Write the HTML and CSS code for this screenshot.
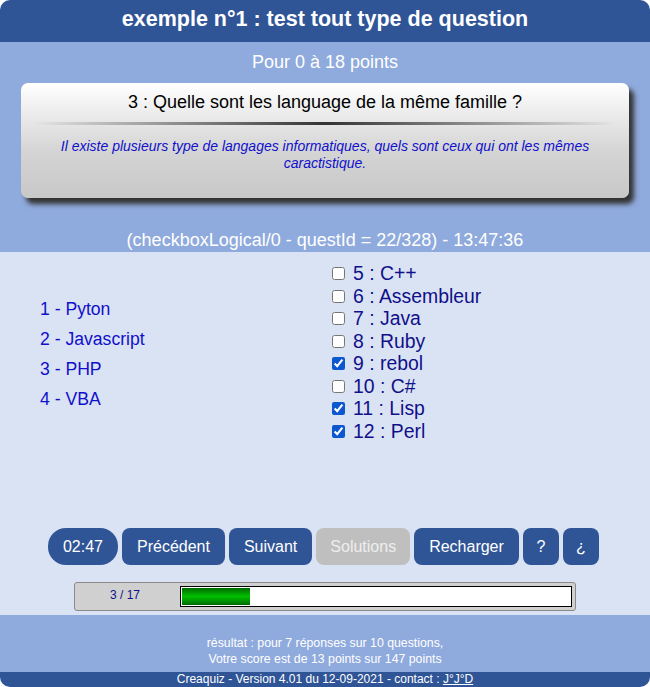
FILE: index.html
```html
<!DOCTYPE html>
<html lang="fr">
<head>
<meta charset="utf-8">
<title>Creaquiz</title>
<link rel="stylesheet" href="styles.css">
</head>
<body>
<div class="quiz">
  <div class="header">exemple n°1 : test tout type de question</div>
  <div class="band">
    <div class="points">Pour 0 à 18 points</div>
    <div class="card">
      <div class="card-title">3 : Quelle sont les language de la même famille ?</div>
      <div class="sep"></div>
      <div class="card-desc">Il existe plusieurs type de langages informatiques, quels sont ceux qui ont les mêmes caractistique.</div>
    </div>
    <div class="info">(checkboxLogical/0 - questId = 22/328) - 13:47:36</div>
  </div>
  <div class="main">
    <div class="answers">
      <div class="left">
        <div class="item">1 - Pyton</div>
        <div class="item">2 - Javascript</div>
        <div class="item">3 - PHP</div>
        <div class="item">4 - VBA</div>
      </div>
      <div class="right">
        <label class="opt"><input type="checkbox"> 5 : C++</label>
        <label class="opt"><input type="checkbox"> 6 : Assembleur</label>
        <label class="opt"><input type="checkbox"> 7 : Java</label>
        <label class="opt"><input type="checkbox"> 8 : Ruby</label>
        <label class="opt"><input type="checkbox" checked> 9 : rebol</label>
        <label class="opt"><input type="checkbox"> 10 : C#</label>
        <label class="opt"><input type="checkbox" checked> 11 : Lisp</label>
        <label class="opt"><input type="checkbox" checked> 12 : Perl</label>
      </div>
    </div>
    <div class="buttons">
      <span class="btn timer">02:47</span>
      <span class="btn">Précédent</span>
      <span class="btn">Suivant</span>
      <span class="btn disabled">Solutions</span>
      <span class="btn">Recharger</span>
      <span class="btn small">?</span>
      <span class="btn small">¿</span>
    </div>
    <div class="progress">
      <div class="progress-label">3 / 17</div>
      <div class="progress-track"><div class="progress-fill" style="width: 17.6%"></div></div>
    </div>
  </div>
  <div class="result">
    <div>résultat : pour 7 réponses sur 10 questions,</div>
    <div>Votre score est de 13 points sur 147 points</div>
  </div>
  <div class="footer">Creaquiz - Version 4.01 du 12-09-2021 - contact : <a href="#">J°J°D</a></div>
</div>
</body>
</html>
```

FILE: styles.css
```css
* { box-sizing: border-box; }
html, body { margin: 0; padding: 0; background: #ffffff; }
body { font-family: "Liberation Sans", Arial, sans-serif; }

.quiz {
  width: 650px;
  height: 687px;
  border-radius: 10px;
  overflow: hidden;
  display: flex;
  flex-direction: column;
}

.header {
  height: 42px;
  background: #2f5597;
  color: #ffffff;
  font-weight: bold;
  font-size: 21.5px;
  line-height: 38px;
  text-align: center;
}

.band {
  background: #8faadc;
  height: 210px;
  padding: 10px 0 0;
  display: flex;
  flex-direction: column;
  align-items: center;
}

.points {
  color: #ffffff;
  font-size: 18px;
  line-height: 21px;
  text-align: center;
}

.card {
  margin-top: 10px;
  width: 608px;
  height: 115px;
  border-radius: 7px;
  background: linear-gradient(#ffffff, #d4d4d4 60%, #c8c8c8);
  box-shadow: 5px 6px 5px #333333;
  padding-top: 9px;
  text-align: center;
}

.card-title {
  font-size: 18px;
  line-height: 21px;
  color: #000000;
}

.sep {
  height: 3px;
  margin: 9px 12px 0;
  background: linear-gradient(90deg, rgba(60,60,60,0), #333333 50%, rgba(60,60,60,0));
}

.card-desc {
  margin: 13px 30px 0;
  font-size: 14px;
  line-height: 17px;
  font-style: italic;
  color: #1010cc;
}

.info {
  margin-top: 32px;
  color: #ffffff;
  font-size: 18px;
  line-height: 21px;
}

.main {
  background: #dae3f3;
  height: 363px;
  padding-top: 10px;
}

.answers {
  display: flex;
  align-items: center;
}

.left {
  width: 328px;
  padding-left: 40px;
  padding-top: 3px;
}

.item {
  font-size: 17.6px;
  line-height: 30px;
  color: #1010cc;
}

.right {
  display: flex;
  flex-direction: column;
}

.opt {
  font-size: 19.4px;
  line-height: 22.5px;
  color: #10108a;
  display: flex;
  align-items: center;
}

.opt input {
  width: 13px;
  height: 13px;
  margin: 1px 8px 0 4px;
  accent-color: #0b57d0;
}

.buttons {
  margin-top: 86px;
  padding-left: 48px;
  display: flex;
  gap: 4px;
}

.btn {
  height: 37px;
  line-height: 37px;
  padding: 0 15px;
  background: #2f5597;
  color: #ffffff;
  font-size: 16px;
  border-radius: 8px;
}

.btn.timer { border-radius: 18px; width: 70px; text-align: center; padding: 0; }
.btn.small { width: 36px; padding: 0; text-align: center; }
.btn.disabled { background: #bfbfbf; color: #eeeeee; padding: 0 14px; }

.progress {
  margin: 17px auto 0;
  width: 502px;
  height: 29px;
  background: #d0d0d0;
  border: 1px solid #8a8a8a;
  border-radius: 3px;
  display: flex;
  align-items: center;
}

.progress-label {
  width: 105px;
  padding-left: 35px;
  font-size: 12px;
  color: #10108a;
  margin-top: -4px;
}

.progress-track {
  width: 392px;
  height: 21px;
  background: #ffffff;
  border: 1px solid #000000;
  padding: 1px;
}

.progress-fill {
  height: 100%;
  background: linear-gradient(#006a00, #00c000 50%, #006a00);
}

.result {
  background: #8faadc;
  height: 57px;
  padding-top: 20px;
  color: #ffffff;
  font-size: 12.3px;
  line-height: 16px;
  text-align: center;
}

.footer {
  background: #2f5597;
  height: 15px;
  color: #ffffff;
  font-size: 12px;
  line-height: 15px;
  text-align: center;
}

.footer a { color: #ffffff; text-decoration: underline; }
```
